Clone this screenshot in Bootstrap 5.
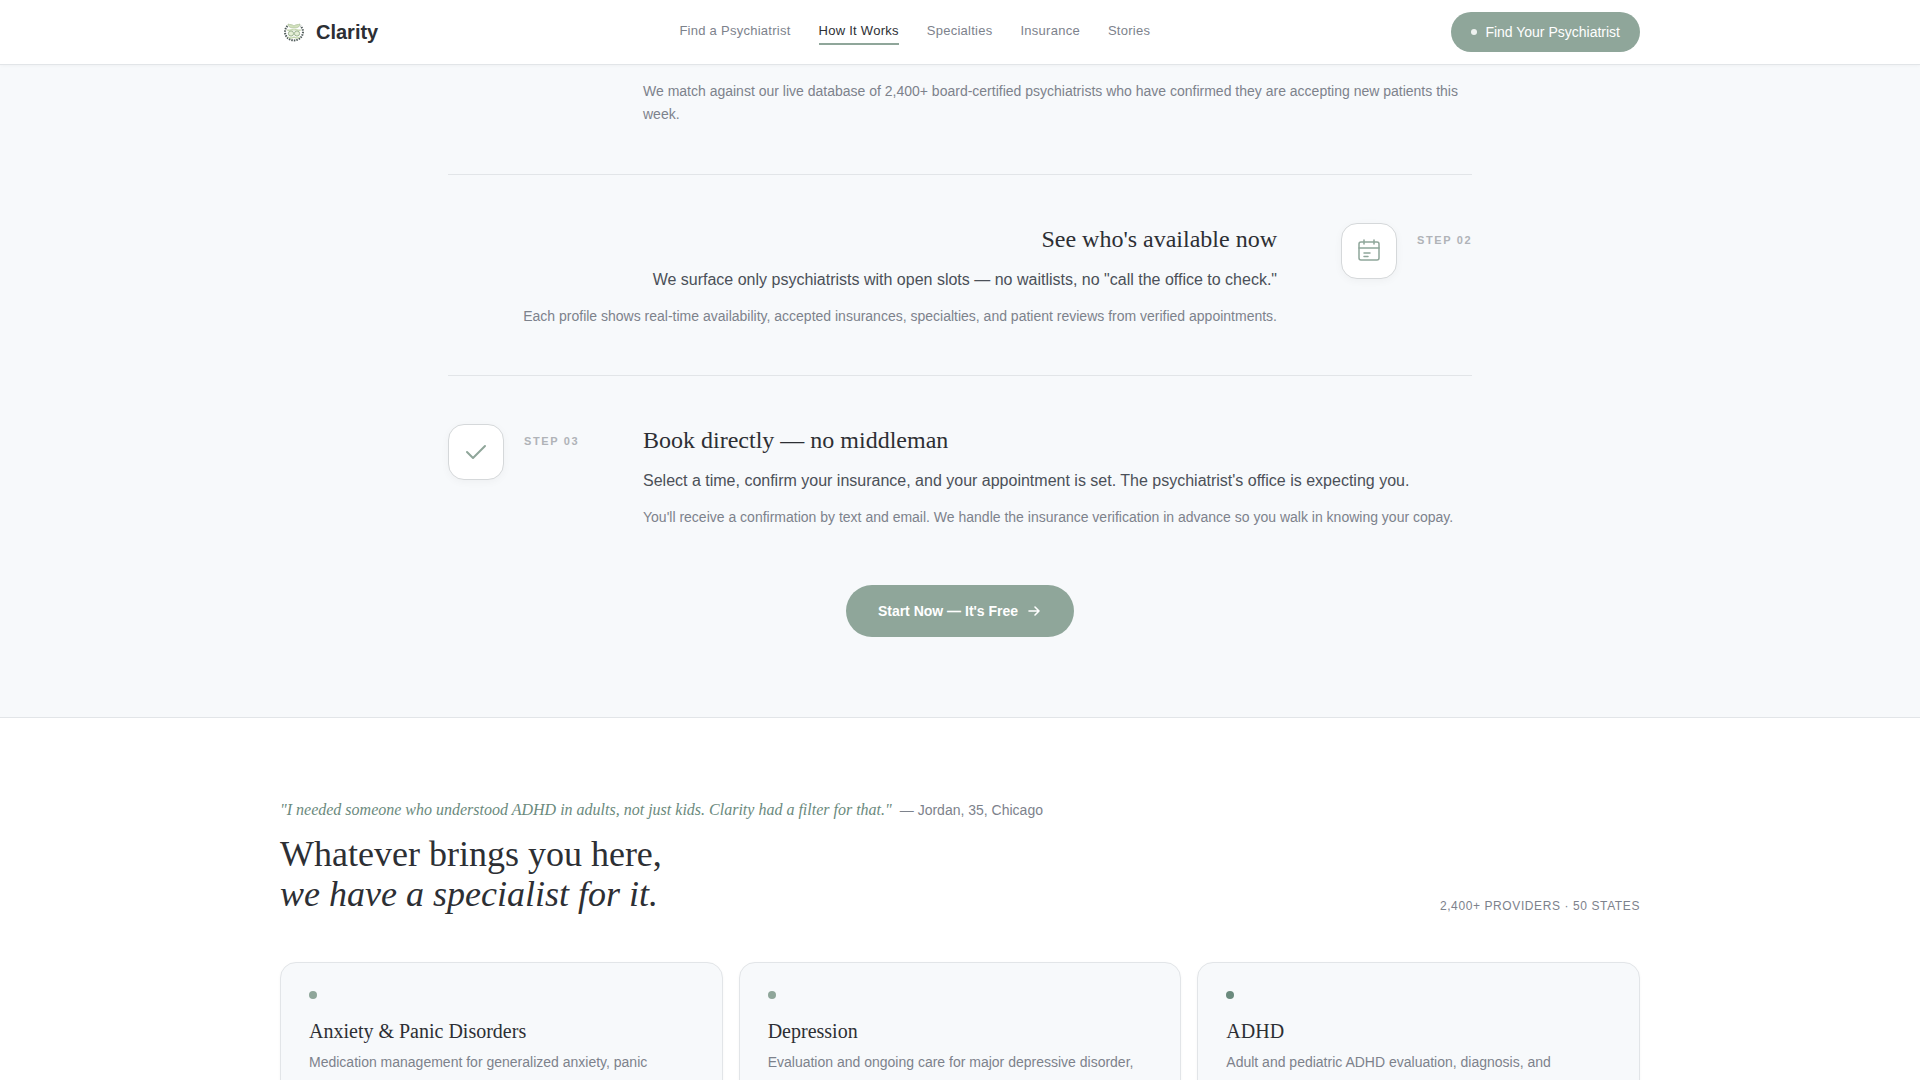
<!DOCTYPE html>
<html lang="en">
<head>
<meta charset="utf-8">
<meta name="viewport" content="width=device-width, initial-scale=1">
<title>Clarity</title>
<link rel="stylesheet" href="https://cdn.jsdelivr.net/npm/bootstrap@5.3.0/dist/css/bootstrap.min.css">
<style>
:root { --sage: #8fa69a; --sage-deep: #6b8a7d; --ink: #2d2f34; --body-ink: #4b5058; --soft: #7d828c; --line: #e2e5e8; --mist: #f7f9fb; }
body { font-family: "Liberation Sans", Arial, sans-serif; color: var(--ink); font-size: 14px; line-height: 23px; }
.shell { max-width: 1440px; padding-left: 40px; padding-right: 40px; }
.serif { font-family: "Liberation Serif", "Times New Roman", serif; font-weight: 400; color: var(--ink); }
.site-nav { height: 65px; border-bottom: 1px solid var(--line); box-shadow: 0 1px 3px rgba(0,0,0,.03); }
.brand-name { font-size: 20px; line-height: 24px; font-weight: 700; color: var(--ink); gap: 8px; }
.menu { gap: 28px; }
.menu a { font-size: 13px; line-height: 22px; letter-spacing: .02em; color: var(--soft); text-decoration: none; padding-bottom: 1px; border-bottom: 2px solid transparent; }
.menu a.active { color: var(--ink); border-color: var(--sage); }
.btn-sage { --bs-btn-bg: var(--sage); --bs-btn-color: #fff; --bs-btn-border-color: var(--sage); --bs-btn-hover-bg: var(--sage-deep); --bs-btn-hover-color: #fff; --bs-btn-font-size: 14px; border: 0; line-height: 20px; }
.btn-find { padding: 10px 20px; }
.btn-start { padding: 16px 32px; --bs-btn-font-weight: 700; }
.pulse { width: 6px; height: 6px; background: rgba(255,255,255,.85); }
.how { background: var(--mist); border-bottom: 1px solid var(--line); padding-bottom: 80px; }
.steps { max-width: 1024px; }
.step { gap: 64px; padding: 48px 0 47px; }
.step + .step { border-top: 1px solid var(--line); }
.step:first-child { padding: 15px 0 48px; }
.step:last-child { padding-bottom: 0; }
.step-side { gap: 20px; width: 131px; flex: none; }
.step-tile { width: 56px; height: 56px; flex: none; background: #fff; border: 1px solid #d5d8da; border-radius: 16px; box-shadow: 0 2px 8px rgba(0,0,0,.04); }
.step-label { font-size: 11px; line-height: 18px; font-weight: 700; letter-spacing: .15em; color: #b0b3b8; padding-top: 8px; }
.step h3 { font-size: 24px; line-height: 32px; margin-bottom: 12px; }
.step-text { font-size: 16px; line-height: 26px; color: var(--body-ink); margin-bottom: 12px; }
.soft { color: var(--soft); }
.cta-row { margin-top: 56px; }
.special { padding-top: 80px; }
.quote { font-size: 16px; line-height: 24px; margin-bottom: 12px; gap: 8px; }
.quote q { font-style: italic; color: var(--sage-deep); quotes: none; }
.special h2 { font-size: 36px; line-height: 40px; }
.stat { font-size: 12px; line-height: 16px; letter-spacing: .05em; }
.topics { margin-top: 48px; }
.topic { background: var(--mist); border: 1px solid var(--line); border-radius: 16px; padding: 28px; box-shadow: 0 1px 3px rgba(0,0,0,.04); }
.topic-dot { width: 8px; height: 8px; background: var(--sage); margin-bottom: 20px; }
.topic-dot.deep { background: var(--sage-deep); }
.topic h3 { font-size: 20px; line-height: 24px; margin-bottom: 8px; }
</style>
</head>
<body class="bg-white vh-100 overflow-hidden">
<header class="site-nav bg-white position-relative">
  <div class="container-fluid shell d-flex justify-content-between align-items-center h-100">
    <a class="brand-name d-flex align-items-center text-decoration-none" href="#">
      <svg width="28" height="28" viewBox="0 0 28 28" fill="none" aria-hidden="true">
        <path d="M7.500 8A9 8.500 0 1 0 20.500 8" stroke="#505b5a" stroke-width="2" stroke-dasharray="1.500 1"/>
        <path d="M8 6c0 3 3 4 6 4 3 0 6-1 6-4-2 1-4 0-6 2-2-2-4-1-6-2Z" fill="#d3e2bd" stroke="#a9be97" stroke-width=".7"/>
        <path d="M7 12c3 1 5-1 7 0 2-1 4 1 7 0M8 19c3 2 4 1 6 0 2 1 3 2 6 0" stroke="#c3d6ac" stroke-width="1.300"/>
        <circle cx="11" cy="15.500" r="2.600" stroke="#9bb28f" fill="#e4eed5"/><circle cx="17" cy="15.500" r="2.600" stroke="#9bb28f" fill="#e4eed5"/>
      </svg>
      Clarity
    </a>
    <nav class="menu d-flex" aria-label="Main">
      <a href="#">Find a Psychiatrist</a>
      <a href="#" class="active" aria-current="page">How It Works</a>
      <a href="#">Specialties</a>
      <a href="#">Insurance</a>
      <a href="#">Stories</a>
    </nav>
    <button type="button" class="btn btn-sage btn-find rounded-pill d-flex align-items-center gap-2"><span class="pulse rounded-circle"></span>Find Your Psychiatrist</button>
  </div>
</header>
<main>
  <section class="how">
    <div class="steps mx-auto">
      <article class="step d-flex">
        <div class="step-side"></div>
        <p class="soft mb-0 flex-fill">We match against our live database of 2,400+ board-certified psychiatrists who have confirmed they are accepting new patients this week.</p>
      </article>
      <article class="step d-flex">
        <div class="flex-fill text-end">
          <h3 class="serif">See who's available now</h3>
          <p class="step-text">We surface only psychiatrists with open slots — no waitlists, no "call the office to check."</p>
          <p class="soft mb-0">Each profile shows real-time availability, accepted insurances, specialties, and patient reviews from verified appointments.</p>
        </div>
        <div class="step-side d-flex align-items-start">
          <div class="step-tile d-flex align-items-center justify-content-center">
            <svg width="24" height="24" viewBox="0 0 24 24" fill="none" stroke="#8fa69a" stroke-width="1.500" stroke-linecap="round" aria-hidden="true"><rect x="2" y="3" width="20" height="18" rx="2"/><path d="M2 9h20M7 1v4M17 1v4M7 14h6M7 17.500h4"/></svg>
          </div>
          <span class="step-label text-nowrap">STEP 02</span>
        </div>
      </article>
      <article class="step d-flex">
        <div class="step-side d-flex align-items-start">
          <div class="step-tile d-flex align-items-center justify-content-center">
            <svg width="24" height="24" viewBox="0 0 24 24" fill="none" stroke="#8fa69a" stroke-width="2" stroke-linecap="round" stroke-linejoin="round" aria-hidden="true"><path d="M3 12l6 6L21 6"/></svg>
          </div>
          <span class="step-label text-nowrap">STEP 03</span>
        </div>
        <div class="flex-fill">
          <h3 class="serif">Book directly — no middleman</h3>
          <p class="step-text">Select a time, confirm your insurance, and your appointment is set. The psychiatrist's office is expecting you.</p>
          <p class="soft mb-0">You'll receive a confirmation by text and email. We handle the insurance verification in advance so you walk in knowing your copay.</p>
        </div>
      </article>
    </div>
    <div class="cta-row d-flex justify-content-center">
      <button type="button" class="btn btn-sage btn-start rounded-pill d-flex align-items-center gap-2">Start Now — It's Free
        <svg width="16" height="16" viewBox="0 0 16 16" fill="none" stroke="currentColor" stroke-width="1.600" stroke-linecap="round" stroke-linejoin="round" aria-hidden="true"><path d="M3 8h10M9 4l4 4-4 4"/></svg>
      </button>
    </div>
  </section>
  <section class="special container-fluid shell">
    <div class="d-flex justify-content-between align-items-end">
      <div>
        <p class="quote d-flex align-items-baseline"><q class="serif">"I needed someone who understood ADHD in adults, not just kids. Clarity had a filter for that."</q><small class="soft">— Jordan, 35, Chicago</small></p>
        <h2 class="serif mb-0">Whatever brings you here,<br><em>we have a specialist for it.</em></h2>
      </div>
      <span class="stat soft">2,400+ PROVIDERS · 50 STATES</span>
    </div>
    <div class="topics row gx-3">
      <div class="col-4"><article class="topic"><div class="topic-dot rounded-circle"></div><h3 class="serif">Anxiety &amp; Panic Disorders</h3><p class="soft mb-0">Medication management for generalized anxiety, panic</p></article></div>
      <div class="col-4"><article class="topic"><div class="topic-dot rounded-circle"></div><h3 class="serif">Depression</h3><p class="soft mb-0">Evaluation and ongoing care for major depressive disorder,</p></article></div>
      <div class="col-4"><article class="topic"><div class="topic-dot deep rounded-circle"></div><h3 class="serif">ADHD</h3><p class="soft mb-0">Adult and pediatric ADHD evaluation, diagnosis, and</p></article></div>
    </div>
  </section>
</main>
<script src="https://cdn.jsdelivr.net/npm/bootstrap@5.3.0/dist/js/bootstrap.bundle.min.js"></script>
</body>
</html>
